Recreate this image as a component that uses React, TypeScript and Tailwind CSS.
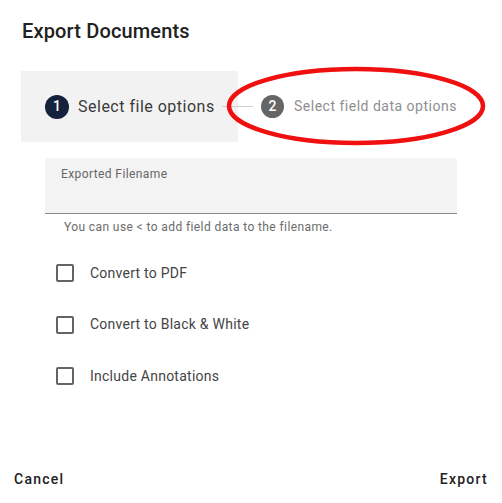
import React from 'react';

const options = ['Convert to PDF', 'Convert to Black & White', 'Include Annotations'];

const App: React.FC = () => {
  return (
    <div className="w-[502px] h-[503px] bg-white flex flex-col font-['Roboto',sans-serif] text-[#212121]">
      <h2 className="pl-[22px] pt-[19px] text-[20px] font-medium leading-[24px] tracking-[0.15px] text-[#222]">Export Documents</h2>

      <div className="relative mt-[28px] flex items-center h-[71px]">
        <div className="ml-[21px] w-[217px] h-full bg-[#f2f2f2] flex items-center pl-[24px]">
          <span className="w-[24px] h-[24px] rounded-full bg-[#15223b] text-white text-[14px] font-medium flex items-center justify-center">1</span>
          <span className="ml-[9px] text-[16px] tracking-[0.5px] text-[#3a3a3a]">Select file options</span>
        </div>
        <div className="w-[31px] h-px bg-[#cfcfcf] -ml-[16px]"></div>
        <span className="ml-[8px] w-[23px] h-[23px] rounded-full bg-[#666] text-white text-[14px] font-medium flex items-center justify-center">2</span>
        <span className="ml-[10px] text-[14px] tracking-[0.5px] text-[#8f8f8f]">Select field data options</span>
        <svg className="absolute left-[226px] top-[-5px] pointer-events-none" width="262" height="80" viewBox="0 0 262 80">
          <ellipse cx="130" cy="40" rx="127" ry="37" fill="none" stroke="#f01010" strokeWidth="4.5" />
        </svg>
      </div>

      <div className="mt-[16px] ml-[45px] w-[412px]">
        <div className="h-[56px] bg-[#f3f3f3] rounded-t-[4px] border-b border-[#8a8a8a] pl-[16px] pt-[3px]">
          <span className="text-[12px] tracking-[0.4px] text-[#666]">Exported Filename</span>
        </div>
        <p className="pl-[19px] pt-[5px] text-[12px] leading-[16px] tracking-[0.4px] text-[#6b6b6b]">You can use &lt; to add field data to the filename.</p>
      </div>

      <div className="mt-[29px] ml-[56px] flex flex-col gap-[33.5px]">
        {options.map((o) => (
          <label key={o} className="flex items-center h-[18px]">
            <span className="w-[18px] h-[18px] border-2 border-[#646464] rounded-[2px]"></span>
            <span className="ml-[16px] text-[14px] tracking-[0.25px] text-[#444]">{o}</span>
          </label>
        ))}
      </div>

      <div className="mt-auto mb-[13px] flex justify-between px-[14px]">
        <button className="text-[14px] font-medium tracking-[1.25px] text-[#222]">Cancel</button>
        <button className="text-[14px] font-medium tracking-[1.25px] text-[#222]">Export</button>
      </div>
    </div>
  );
};

export default App;
